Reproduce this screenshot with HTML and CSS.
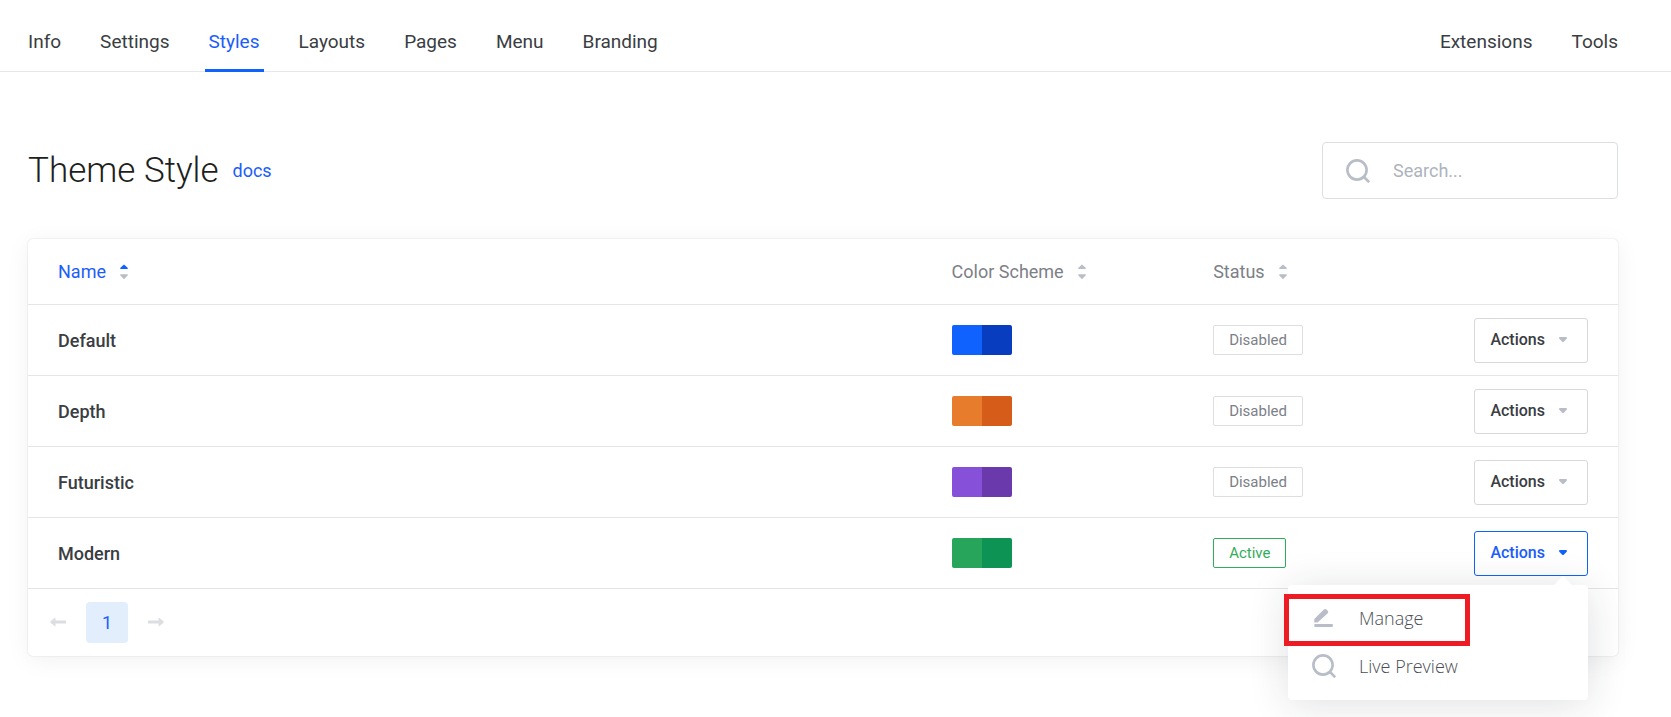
FILE: index.html
```html
<!DOCTYPE html>
<html lang="en">
<head>
<meta charset="utf-8">
<meta name="viewport" content="width=device-width, initial-scale=1">
<title>Theme Style</title>
<link rel="stylesheet" href="styles.css">
</head>
<body>
<svg class="sprite" aria-hidden="true">
  <symbol id="icon-search" viewBox="0 0 24 24"><circle cx="11" cy="11" r="9.6"/><path d="M17.500 17.500l5.700 5.700"/></symbol>
  <symbol id="icon-caret" viewBox="0 0 8 5"><path d="M1 0h6a1 1 0 0 1 .7 1.7L5 4.4a1.4 1.4 0 0 1-2 0L.3 1.7A1 1 0 0 1 1 0z"/></symbol>
  <symbol id="icon-sort" viewBox="0 0 8 16"><path class="sort-up" d="M4 0.4L7.6 3.8Q8.3 5 7.2 5H.8Q-.3 5 .4 3.8z"/><path d="M4 15.2L.4 11.6Q-.3 10.2.8 10.2h6.4q1.1 0 .4 1.4z"/></symbol>
  <symbol id="icon-arrow" viewBox="0 0 16 10"><path d="M4.5.9Q5.5.2 5.5 1.5v2H15a1.3 1.3 0 0 1 0 3H5.500v2q0 1.300-1 .6L.6 5.700Q-.1 5 .6 4.300z"/></symbol>
</svg>
<header class="topbar">
  <nav class="nav">
    <a href="#">Info</a>
    <a href="#">Settings</a>
    <a class="current" href="#" aria-current="page">Styles</a>
    <a href="#">Layouts</a>
    <a href="#">Pages</a>
    <a href="#">Menu</a>
    <a href="#">Branding</a>
  </nav>
  <nav class="nav">
    <a href="#">Extensions</a>
    <a href="#">Tools</a>
  </nav>
</header>
<main class="page">
  <div class="heading">
    <h1>Theme Style</h1>
    <a href="#">docs</a>
    <label class="search">
      <svg class="icon"><use href="#icon-search"/></svg>
      <input type="search" placeholder="Search..." aria-label="Search">
    </label>
  </div>
  <section class="card">
    <table class="styles-table">
      <thead>
        <tr>
          <th class="col-name"><button class="sort sorted" type="button">Name<svg><use href="#icon-sort"/></svg></button></th>
          <th class="col-scheme"><button class="sort" type="button">Color Scheme<svg><use href="#icon-sort"/></svg></button></th>
          <th class="col-status"><button class="sort" type="button">Status<svg><use href="#icon-sort"/></svg></button></th>
          <th class="col-actions"></th>
        </tr>
      </thead>
      <tbody>
        <tr>
          <td class="name">Default</td>
          <td><div class="swatch blue"></div></td>
          <td><span class="badge">Disabled</span></td>
          <td><div class="dropdown"><button class="actions" type="button">Actions<svg><use href="#icon-caret"/></svg></button></div></td>
        </tr>
        <tr>
          <td class="name">Depth</td>
          <td><div class="swatch orange"></div></td>
          <td><span class="badge">Disabled</span></td>
          <td><div class="dropdown"><button class="actions" type="button">Actions<svg><use href="#icon-caret"/></svg></button></div></td>
        </tr>
        <tr>
          <td class="name">Futuristic</td>
          <td><div class="swatch purple"></div></td>
          <td><span class="badge">Disabled</span></td>
          <td><div class="dropdown"><button class="actions" type="button">Actions<svg><use href="#icon-caret"/></svg></button></div></td>
        </tr>
        <tr>
          <td class="name">Modern</td>
          <td><div class="swatch green"></div></td>
          <td><span class="badge active">Active</span></td>
          <td>
            <div class="dropdown">
              <button class="actions open" type="button" aria-expanded="true">Actions<svg><use href="#icon-caret"/></svg></button>
              <div class="menu">
                <a href="#"><svg class="icon pencil" viewBox="0 0 24 24"><path d="M2.300 16.600V13L11.900 3.500a1.800 1.800 0 0 1 2.500 0l1.300 1.300a1.800 1.800 0 0 1 0 2.500L6.400 15.700q-.9.900-2.100.9zM3.200 18h16.800a.9.900 0 0 1 .9.900v1.200a.9.900 0 0 1-.9.900H3.200a.9.900 0 0 1-.9-.9v-1.200a.9.900 0 0 1 .9-.9z"/></svg>Manage</a>
                <a href="#"><svg class="icon"><use href="#icon-search"/></svg>Live Preview</a>
                <div class="highlight"></div>
              </div>
            </div>
          </td>
        </tr>
      </tbody>
    </table>
    <nav class="pager" aria-label="Pagination">
      <button type="button" aria-label="Previous page" disabled><svg><use href="#icon-arrow"/></svg></button>
      <button class="number" type="button" aria-current="page">1</button>
      <button type="button" aria-label="Next page" disabled><svg class="flip"><use href="#icon-arrow"/></svg></button>
    </nav>
  </section>
</main>
</body>
</html>
```

FILE: styles.css
```css
* { box-sizing: border-box; }
body {
  margin: 0;
  min-height: 100vh;
  background: #fff;
  color: #3a3d42;
  font: 18px/24px Roboto, sans-serif;
}
a { color: inherit; text-decoration: none; }
button, input { font: inherit; color: inherit; background: none; border: 0; padding: 0; }
.sprite { position: absolute; width: 0; height: 0; }
.icon {
  flex: none;
  width: 24px;
  height: 24px;
  fill: none;
  stroke: #b8bdc7;
  stroke-width: 2.6;
}

.topbar {
  display: flex;
  justify-content: space-between;
  padding: 0 49px 0 24px;
  border-bottom: 1px solid #e6e7e8;
}
.nav { display: flex; gap: 31px; font-size: 19px; }
.nav a { padding: 31px 4px 16px; margin-bottom: -1px; border-bottom: 3px solid transparent; line-height: 22px; }
.nav .current { color: #1b5dfc; border-color: #0f62fe; }

.page { padding: 70px 53px 40px 28px; }
.heading { display: flex; align-items: center; gap: 14px; margin-bottom: 40px; }
h1 { margin: 0; color: #1d1e20; font-size: 35px; font-weight: 300; line-height: 48px; }
.heading > a { color: #1b5dfc; }
.search {
  display: flex;
  align-items: center;
  gap: 23px;
  width: 296px;
  height: 57px;
  margin-left: auto;
  padding: 0 23px;
  border: 1px solid #dcdee2;
  border-radius: 4px;
}
.search input { flex: 1; min-width: 0; outline: 0; }
.search input::placeholder { color: #aeb3bd; opacity: 1; }

.card {
  background: #fff;
  border-radius: 5px;
  box-shadow: 0 0 2px rgba(0, 0, 0, .14), 0 4px 24px rgba(0, 0, 0, .06);
}
.styles-table { width: 100%; table-layout: fixed; border-collapse: separate; border-spacing: 0; }
.styles-table th, .styles-table td { padding: 0 30px; text-align: left; vertical-align: middle; border-bottom: 1px solid #e4e5e8; }
.styles-table th { height: 66px; font-weight: 400; }
.styles-table td { height: 71px; }
.styles-table .col-name { width: 56.2%; }
.styles-table .col-scheme { width: 16.45%; }
.styles-table .col-status { width: 12%; }
.sort { display: flex; align-items: center; gap: 14px; color: #7d8087; }
.sort svg { width: 8px; height: 16px; fill: #b8bdc7; color: #b8bdc7; }
.sorted { color: #1b5dfc; }
.sort.sorted svg { color: #0f62fe; }
.sort-up { fill: currentColor; }
.styles-table .name { padding-top: 2px; font-weight: 500; }
.swatch { width: 60px; height: 30px; border-radius: 2px; }
.blue { background: linear-gradient(90deg, #0f62fe 50%, #083dbf 50%); }
.orange { background: linear-gradient(90deg, #e87c2d 50%, #d65c19 50%); }
.purple { background: linear-gradient(90deg, #8650d8 50%, #6a39ab 50%); }
.green { background: linear-gradient(90deg, #27a65b 50%, #0d9455 50%); }
.badge {
  display: block;
  width: fit-content;
  padding: 0 15px;
  color: #7d8087;
  font-size: 15px;
  line-height: 28px;
  border: 1px solid #dcdee2;
  border-radius: 2px;
}
.badge.active { color: #32ac5b; border-color: #32ac5b; }

.dropdown { position: relative; width: fit-content; margin-left: auto; }
.actions {
  display: flex;
  align-items: center;
  gap: 14px;
  height: 45px;
  padding: 0 20px 0 15px;
  font-size: 16px;
  font-weight: 500;
  background: #fff;
  border: 1px solid #d6d8de;
  border-radius: 3px;
}
.actions svg { width: 8px; height: 5px; margin-bottom: 2px; fill: #b8bdc7; }
.actions.open { color: #1b5dfc; border-color: #0f62fe; }
.actions.open svg { fill: #0f62fe; }
.menu {
  position: absolute;
  top: 54px;
  right: 0;
  z-index: 1;
  width: 300px;
  padding: 9px 0 10px;
  color: #4b4e55;
  font-family: "Open Sans", sans-serif;
  font-weight: 300;
  background: #fff;
  border-radius: 4px;
  box-shadow: 0 4px 40px rgba(25, 35, 50, .14);
}
.menu::before {
  content: "";
  position: absolute;
  top: -9px;
  right: 15px;
  border: 10px solid transparent;
  border-top: 0;
  border-bottom-color: #fff;
}
.menu a { display: flex; align-items: center; gap: 23px; height: 48px; padding: 0 24px; }
.menu .pencil { fill: #b8bdc7; stroke: none; }
.highlight {
  position: absolute;
  top: 9px;
  left: -4px;
  width: 186px;
  height: 52px;
  border: 5px solid #ed1c24;
  pointer-events: none;
}

.pager { display: flex; align-items: center; gap: 20px; padding: 13px 22px; }
.pager svg { display: block; width: 16px; height: 10px; margin-bottom: 2px; fill: #dcdee2; }
.pager .flip { transform: scaleX(-1); }
.pager .number { width: 42px; height: 41px; color: #1b5dfc; background: #e3eefd; border-radius: 4px; }
```
